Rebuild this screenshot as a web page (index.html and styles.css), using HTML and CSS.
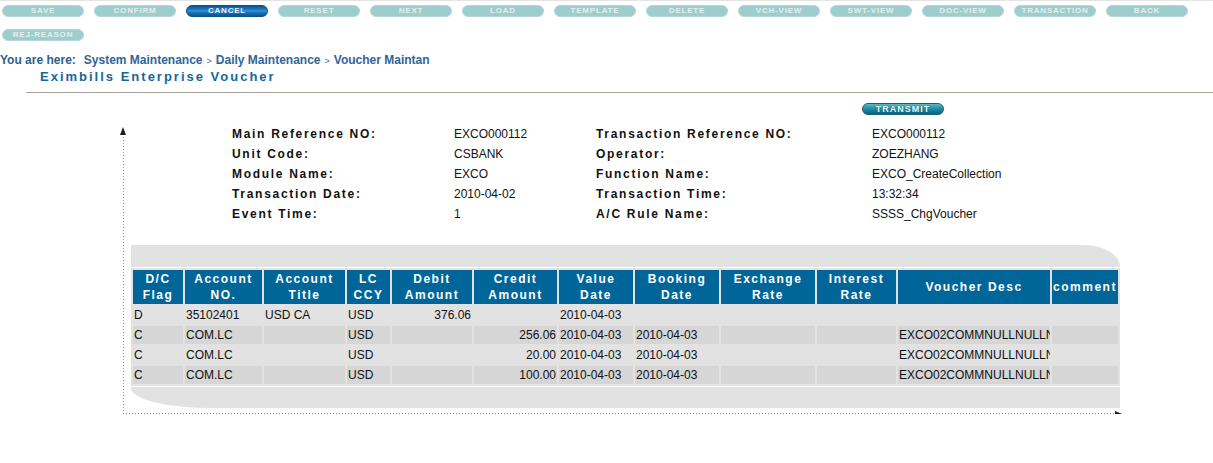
FILE: index.html
```html
<!DOCTYPE html>
<html>
<head>
<meta charset="utf-8">
<title>Eximbills Enterprise Voucher</title>
<link rel="stylesheet" href="styles.css">
</head>
<body>
<div class="topline"></div>
<div class="toolbar">
  <span class="btn">SAVE</span>
  <span class="btn">CONFIRM</span>
  <span class="btn btn-active">CANCEL</span>
  <span class="btn">RESET</span>
  <span class="btn">NEXT</span>
  <span class="btn">LOAD</span>
  <span class="btn">TEMPLATE</span>
  <span class="btn">DELETE</span>
  <span class="btn">VCH-VIEW</span>
  <span class="btn">SWT-VIEW</span>
  <span class="btn">DOC-VIEW</span>
  <span class="btn">TRANSACTION</span>
  <span class="btn">BACK</span>
  <span class="btn">REJ-REASON</span>
</div>
<div class="crumbs"><span class="here">You are here:</span><a class="crumb">System Maintenance</a><span class="sep">&gt;</span><a class="crumb">Daily Maintenance</a><span class="sep">&gt;</span><a class="crumb">Voucher Maintan</a></div>
<h1 class="title">Eximbills Enterprise Voucher</h1>
<div class="rule"></div>
<div class="actions"><span class="transmit">TRANSMIT</span></div>
<div class="frame">
  <span class="arrow-up"></span>
  <div class="info">
    <span class="lbl">Main Reference NO:</span><span class="val">EXCO000112</span><span class="lbl">Transaction Reference NO:</span><span class="val">EXCO000112</span>
    <span class="lbl">Unit Code:</span><span class="val">CSBANK</span><span class="lbl">Operator:</span><span class="val">ZOEZHANG</span>
    <span class="lbl">Module Name:</span><span class="val">EXCO</span><span class="lbl">Function Name:</span><span class="val">EXCO_CreateCollection</span>
    <span class="lbl">Transaction Date:</span><span class="val">2010-04-02</span><span class="lbl">Transaction Time:</span><span class="val">13:32:34</span>
    <span class="lbl">Event Time:</span><span class="val">1</span><span class="lbl">A/C Rule Name:</span><span class="val">SSSS_ChgVoucher</span>
  </div>
  <div class="panel">
    <div class="panel-top"></div>
    <table class="vouchers">
      <colgroup>
        <col class="c-flag"><col class="c-acno"><col class="c-title"><col class="c-ccy"><col class="c-debit"><col class="c-credit"><col class="c-vdate"><col class="c-bdate"><col class="c-xrate"><col class="c-irate"><col class="c-desc"><col class="c-comment">
      </colgroup>
      <thead>
        <tr>
          <th>D/C<br>Flag</th><th>Account<br>NO.</th><th>Account<br>Title</th><th>LC<br>CCY</th><th>Debit<br>Amount</th><th>Credit<br>Amount</th><th>Value<br>Date</th><th>Booking<br>Date</th><th>Exchange<br>Rate</th><th>Interest<br>Rate</th><th>Voucher Desc</th><th>comment</th>
        </tr>
      </thead>
      <tbody>
        <tr><td>D</td><td>35102401</td><td>USD CA</td><td>USD</td><td class="num">376.06</td><td class="num"></td><td>2010-04-03</td><td></td><td></td><td></td><td></td><td></td></tr>
        <tr class="alt"><td>C</td><td>COM.LC</td><td></td><td>USD</td><td class="num"></td><td class="num">256.06</td><td>2010-04-03</td><td>2010-04-03</td><td></td><td></td><td>EXCO02COMMNULLNULLNULL</td><td></td></tr>
        <tr><td>C</td><td>COM.LC</td><td></td><td>USD</td><td class="num"></td><td class="num">20.00</td><td>2010-04-03</td><td>2010-04-03</td><td></td><td></td><td>EXCO02COMMNULLNULLNULL</td><td></td></tr>
        <tr class="alt"><td>C</td><td>COM.LC</td><td></td><td>USD</td><td class="num"></td><td class="num">100.00</td><td>2010-04-03</td><td>2010-04-03</td><td></td><td></td><td>EXCO02COMMNULLNULLNULL</td><td></td></tr>
      </tbody>
    </table>
    <div class="panel-bottom"></div>
  </div>
  <span class="arrow-right"></span>
</div>
</body>
</html>
```

FILE: styles.css
```css
html, body {
  margin: 0;
  padding: 0;
  background: #ffffff;
  font-family: "Liberation Sans", Arial, sans-serif;
  color: #111111;
}

.topline {
  height: 1px;
  background: #e4e4e4;
}

.toolbar {
  display: flex;
  flex-wrap: wrap;
  column-gap: 10px;
  row-gap: 12px;
  padding: 4px 2px 0 2px;
  width: 1200px;
}

.btn {
  box-sizing: border-box;
  width: 82px;
  height: 12px;
  border-radius: 6px;
  background: #9dcdcd;
  border: 1px solid #b9d6d6;
  color: #e4efef;
  font-size: 8px;
  font-weight: bold;
  letter-spacing: 0.8px;
  line-height: 10px;
  text-align: center;
}

.btn-active {
  background: linear-gradient(to bottom, #0a5797 0%, #1c7ac2 35%, #3b92d2 50%, #1a74bb 65%, #0a5190 100%);
  border-color: #0d4f86;
  color: #e6f2fb;
}

.crumbs {
  margin-top: 12px;
  height: 14px;
  line-height: 14px;
  font-size: 12px;
  font-weight: bold;
  white-space: nowrap;
}

.here {
  color: #2c5f8c;
  margin-right: 8px;
}

.crumb {
  color: #2f6596;
}

.sep {
  color: #3d6a92;
  font-size: 9px;
  font-weight: normal;
  margin: 0 4px;
}

.title {
  margin: 2px 0 0 40px;
  height: 16px;
  line-height: 16px;
  font-size: 13px;
  font-weight: bold;
  letter-spacing: 2px;
  color: #14679a;
}

.rule {
  margin: 7px 0 0 26px;
  height: 1px;
  background: #aaa69a;
}

.actions {
  margin: 10px 0 0 862px;
  height: 12px;
}

.transmit {
  display: block;
  box-sizing: border-box;
  width: 82px;
  height: 12px;
  border-radius: 6px;
  background: linear-gradient(to bottom, #5cb8c8 0%, #2a93aa 40%, #137b93 70%, #0c6379 100%);
  border: 1px solid #1d5f73;
  color: #e8ffff;
  font-size: 9px;
  font-weight: bold;
  letter-spacing: 1px;
  line-height: 10px;
  text-align: center;
  text-shadow: 0 0 1px #0b4d60;
}

.frame {
  position: relative;
  box-sizing: border-box;
  margin: 9px 0 0 123px;
  width: 997px;
  padding-bottom: 6px;
  background-image:
    repeating-linear-gradient(to bottom, #8c8c8c 0 1px, transparent 1px 3px),
    repeating-linear-gradient(to right, #8c8c8c 0 1px, transparent 1px 3px);
  background-size: 1px calc(100% - 10px), calc(100% - 6px) 1px;
  background-position: left bottom, left bottom;
  background-repeat: no-repeat;
}

.arrow-up {
  position: absolute;
  left: -3px;
  top: 3px;
  width: 0;
  height: 0;
  border-left: 3.5px solid transparent;
  border-right: 3.5px solid transparent;
  border-bottom: 8px solid #1e1e1e;
}

.arrow-right {
  position: absolute;
  left: 992px;
  bottom: -3px;
  width: 0;
  height: 0;
  border-top: 3.5px solid transparent;
  border-bottom: 3.5px solid transparent;
  border-left: 7px solid #1e1e1e;
}

.info {
  display: grid;
  grid-template-columns: 222px 142px 276px auto;
  margin-left: 109px;
  line-height: 20px;
  font-size: 12px;
}

.lbl {
  font-weight: bold;
  letter-spacing: 1.7px;
  white-space: nowrap;
}

.val {
  white-space: nowrap;
}

.panel {
  margin: 21px 0 0 8px;
  width: 989px;
}

.panel-top {
  height: 22px;
  background: #e2e2e2;
  border-top-right-radius: 36px 22px;
  margin-bottom: 1px;
}

.panel-bottom {
  height: 21px;
  background: #e2e2e2;
  border-bottom-left-radius: 80px 20px;
  margin-top: 1px;
}

.vouchers {
  table-layout: fixed;
  width: 989px;
  border-collapse: separate;
  border-spacing: 2px;
  background: #e2e2e2;
  font-size: 12px;
}

.c-flag { width: 50px; }
.c-acno { width: 77px; }
.c-title { width: 81px; }
.c-ccy { width: 43px; }
.c-debit { width: 80px; }
.c-credit { width: 83px; }
.c-vdate { width: 74px; }
.c-bdate { width: 84px; }
.c-xrate { width: 94px; }
.c-irate { width: 79px; }
.c-desc { width: 152px; }
.c-comment { width: 66px; }

.vouchers th {
  box-sizing: border-box;
  height: 34px;
  padding: 1px 0;
  background: #006699;
  color: #ffffff;
  font-weight: bold;
  letter-spacing: 1.5px;
  line-height: 16px;
  text-align: center;
  vertical-align: middle;
  overflow: hidden;
  white-space: nowrap;
}

.vouchers td {
  box-sizing: border-box;
  height: 18px;
  padding: 0 1px;
  line-height: 18px;
  white-space: nowrap;
  overflow: hidden;
  color: #111111;
}

.vouchers tr.alt td {
  background: #d6d6d6;
}

.vouchers td.num {
  text-align: right;
}
```
